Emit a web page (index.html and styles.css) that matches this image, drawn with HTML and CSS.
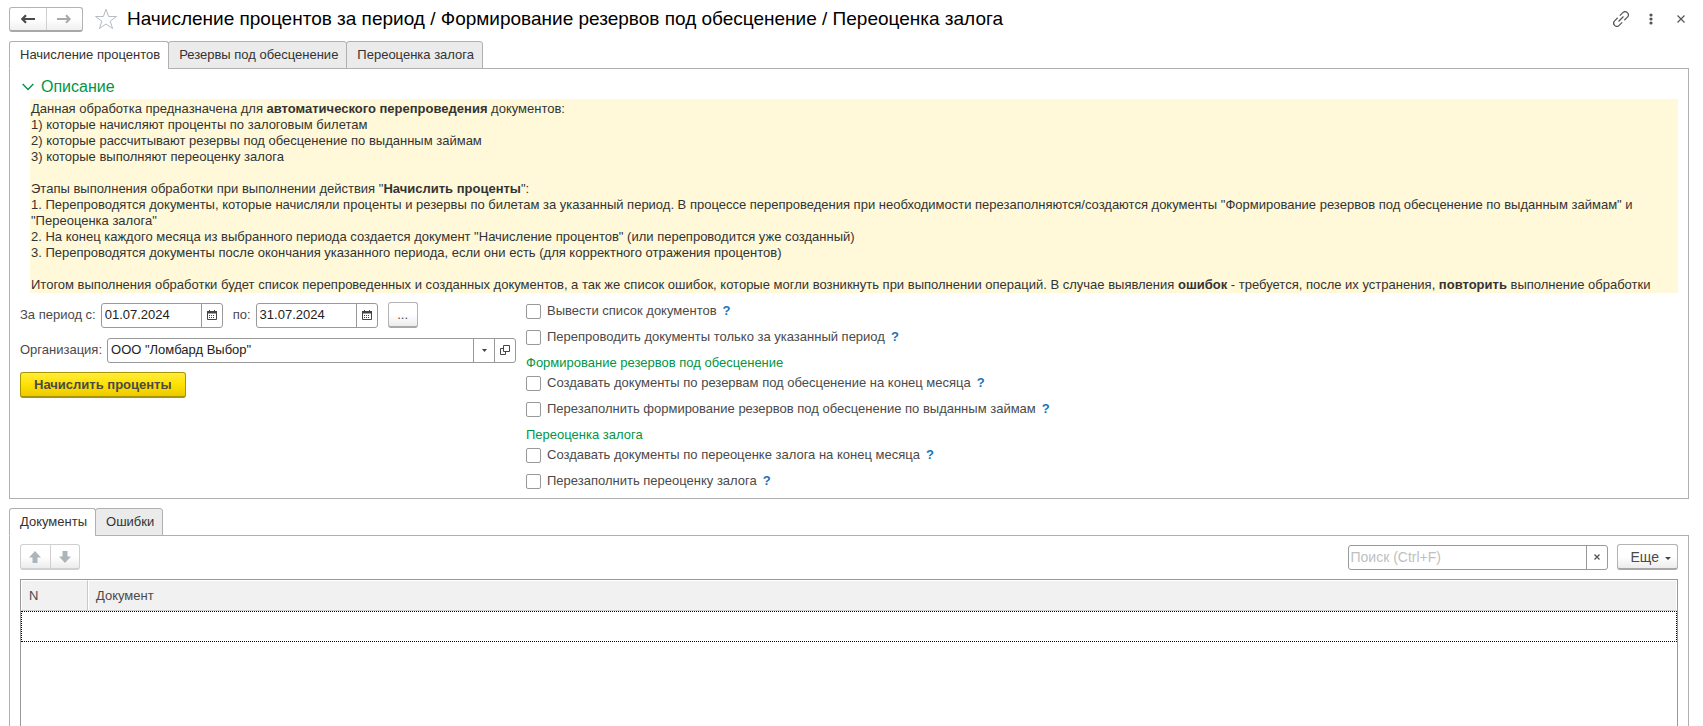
FILE: index.html
```html
<!DOCTYPE html>
<html lang="ru">
<head>
<meta charset="utf-8">
<title>Начисление процентов за период</title>
<link rel="stylesheet" href="styles.css">
</head>
<body>
<header class="titlebar">
  <div class="nav">
    <button class="nav-btn" type="button" aria-label="Назад"><svg width="14" height="10" viewBox="0 0 14 10"><path d="M5 1.200 1.300 5 5 8.800M1.500 5H14" fill="none" stroke="#4a4a4a" stroke-width="2.200"/></svg></button>
    <button class="nav-btn" type="button" aria-label="Вперед"><svg width="14" height="10" viewBox="0 0 14 10"><path d="M9 1.200 12.700 5 9 8.800M12.500 5H0" fill="none" stroke="#a8a8a8" stroke-width="2"/></svg></button>
  </div>
  <button class="icon-btn star" type="button" aria-label="В избранное"><svg width="24" height="22" viewBox="0 0 24 22"><path d="M12 1.200 14.600 8.500H22.500L16.200 13.100 18.600 20.600 12 16 5.400 20.600 7.800 13.100 1.500 8.500H9.400Z" fill="#fff" stroke="#b4bcc4" stroke-width="1"/></svg></button>
  <h1 class="title">Начисление процентов за период / Формирование резервов под обесценение / Переоценка залога</h1>
  <div class="window-tools">
    <button class="icon-btn" type="button" aria-label="Ссылка"><svg width="16" height="16" viewBox="0 0 16 16"><g fill="none" stroke="#555" stroke-width="1.200" transform="rotate(-45 8 8)"><path d="M6.500 4.800H2.200a3.200 3.200 0 0 0 0 6.400H6.500M9.500 4.800h4.300a3.200 3.200 0 0 1 0 6.400H9.500M4.500 8h7"/></g></svg></button>
    <button class="icon-btn" type="button" aria-label="Меню"><svg width="16" height="16" viewBox="0 0 16 16"><g fill="#555"><circle cx="8" cy="4" r="1.600"/><circle cx="8" cy="8" r="1.600"/><circle cx="8" cy="12" r="1.600"/></g></svg></button>
    <button class="icon-btn" type="button" aria-label="Закрыть"><svg width="16" height="16" viewBox="0 0 16 16"><path d="M4.500 4.500l7 7M11.500 4.500l-7 7" stroke="#555" stroke-width="1.200"/></svg></button>
  </div>
</header>

<div class="tabs" role="tablist">
  <button class="tab active" type="button" role="tab" aria-selected="true">Начисление процентов</button>
  <button class="tab" type="button" role="tab">Резервы под обесценение</button>
  <button class="tab" type="button" role="tab">Переоценка залога</button>
</div>
<main class="panel">
  <button class="group-title" type="button" aria-expanded="true"><svg width="12" height="8" viewBox="0 0 12 8"><path d="M0.700 1 6 6.500 11.300 1" fill="none" stroke="#009646" stroke-width="1.400"/></svg>Описание</button>
  <div class="description">
    <p>Данная обработка предназначена для <b>автоматического перепроведения</b> документов:<br>1) которые начисляют проценты по залоговым билетам<br>2) которые рассчитывают резервы под обесценение по выданным займам<br>3) которые выполняют переоценку залога</p>
    <p>Этапы выполнения обработки при выполнении действия "<b>Начислить проценты</b>":<br>1. Перепроводятся документы, которые начисляли проценты и резервы по билетам за указанный период. В процессе перепроведения при необходимости перезаполняются/создаются документы "Формирование резервов под обесценение по выданным займам" и "Переоценка залога"<br>2. На конец каждого месяца из выбранного периода создается документ "Начисление процентов" (или перепроводится уже созданный)<br>3. Перепроводятся документы после окончания указанного периода, если они есть (для корректного отражения процентов)</p>
    <p>Итогом выполнения обработки будет список перепроведенных и созданных документов, а так же список ошибок, которые могли возникнуть при выполнении операций. В случае выявления <b>ошибок</b> - требуется, после их устранения, <b>повторить</b> выполнение обработки</p>
  </div>
  <div class="columns">
    <form class="params">
      <div class="row">
        <label for="from">За период с:</label>
        <div class="field date"><input id="from" type="text" value="01.07.2024"><button type="button" aria-label="Выбрать дату"><svg width="10" height="10" viewBox="0 0 10 10"><path d="M0.500 1.500h9v8h-9z" fill="#fff" stroke="#444"/><path d="M0 1h10v2.500H0z" fill="#444"/><path d="M2.500 0v2M7.500 0v2" stroke="#444"/><path d="M2 5.500h6M2 7.500h6" stroke="#444" stroke-dasharray="1 1"/></svg></button></div>
        <label class="to" for="to">по:</label>
        <div class="field date"><input id="to" type="text" value="31.07.2024"><button type="button" aria-label="Выбрать дату"><svg width="10" height="10" viewBox="0 0 10 10"><path d="M0.500 1.500h9v8h-9z" fill="#fff" stroke="#444"/><path d="M0 1h10v2.500H0z" fill="#444"/><path d="M2.500 0v2M7.500 0v2" stroke="#444"/><path d="M2 5.500h6M2 7.500h6" stroke="#444" stroke-dasharray="1 1"/></svg></button></div>
        <button class="btn dots" type="button">...</button>
      </div>
      <div class="row">
        <label for="org">Организация:</label>
        <div class="field org"><input id="org" type="text" value="ООО &quot;Ломбард Выбор&quot;"><button type="button" aria-label="Список"><svg width="5" height="3" viewBox="0 0 5 3"><path d="M0 0h5L2.500 3z" fill="#444"/></svg></button><button type="button" aria-label="Открыть"><svg width="10" height="10" viewBox="0 0 10 10"><path d="M3.500 0.500h6v6h-6zM3.500 3.500h-3v6h5v-3" fill="none" stroke="#444"/></svg></button></div>
      </div>
      <button class="btn primary" type="button">Начислить проценты</button>
    </form>
    <div class="options">
      <div class="option"><label><input type="checkbox">Вывести список документов</label><button class="help" type="button">?</button></div>
      <div class="option"><label><input type="checkbox">Перепроводить документы только за указанный период</label><button class="help" type="button">?</button></div>
      <h2 class="subhead">Формирование резервов под обесценение</h2>
      <div class="option"><label><input type="checkbox">Создавать документы по резервам под обесценение на конец месяца</label><button class="help" type="button">?</button></div>
      <div class="option"><label><input type="checkbox">Перезаполнить формирование резервов под обесценение по выданным займам</label><button class="help" type="button">?</button></div>
      <h2 class="subhead">Переоценка залога</h2>
      <div class="option"><label><input type="checkbox">Создавать документы по переоценке залога на конец месяца</label><button class="help" type="button">?</button></div>
      <div class="option"><label><input type="checkbox">Перезаполнить переоценку залога</label><button class="help" type="button">?</button></div>
    </div>
  </div>
</main>

<div class="tabs lower" role="tablist">
  <button class="tab active" type="button" role="tab" aria-selected="true">Документы</button>
  <button class="tab" type="button" role="tab">Ошибки</button>
</div>
<section class="panel results">
  <div class="toolbar">
    <div class="move">
      <button class="move-btn" type="button" aria-label="Вверх"><svg width="12" height="12" viewBox="0 0 12 12"><path d="M6 0 12 6.500H8.500V12h-5V6.500H0z" fill="#abb5bc"/></svg></button>
      <button class="move-btn" type="button" aria-label="Вниз"><svg width="12" height="12" viewBox="0 0 12 12"><path d="M6 12 12 5.500H8.500V0h-5v5.500H0z" fill="#abb5bc"/></svg></button>
    </div>
    <div class="field search"><input type="text" aria-label="Поиск" placeholder="Поиск (Ctrl+F)"><button type="button" aria-label="Очистить"><svg width="6" height="6" viewBox="0 0 6 6"><path d="M0.500 0.500l5 5M5.500 0.500l-5 5" stroke="#555" stroke-width="1.300"/></svg></button></div>
    <button class="btn more" type="button">Еще<svg width="6" height="3" viewBox="0 0 6 3"><path d="M0 0h6L3 3z" fill="#444"/></svg></button>
  </div>
  <div class="grid">
    <table>
      <thead><tr><th class="num">N</th><th>Документ</th></tr></thead>
      <tbody><tr><td></td><td></td></tr></tbody>
    </table>
  </div>
</section>
</body>
</html>
```
FILE: styles.css
```css
* { box-sizing: border-box; }
body {
  margin: 0;
  padding: 7px 14px 0 9px;
  height: 100vh;
  overflow: hidden;
  display: flex;
  flex-direction: column;
  background: #fff;
  color: #4a4a4a;
  font: 13px/16px "Liberation Sans", Arial, sans-serif;
}
button, input { font: inherit; color: inherit; margin: 0; }
button { padding: 0; border: 0; background: none; }
svg { display: block; flex: none; }

.titlebar { display: flex; align-items: center; height: 24px; flex: none; margin-bottom: 10px; }
.nav {
  display: flex;
  width: 74px;
  height: 25px;
  border: 1px solid #b3b3b3;
  border-bottom: 2px solid #a8a8a8;
  border-radius: 3px;
  background: linear-gradient(#fff 50%, #f0f0f0);
}
.nav-btn, .move-btn { flex: 1; display: flex; align-items: center; justify-content: center; }
.nav-btn + .nav-btn, .move-btn + .move-btn { border-left: 1px solid #d0d0d0; }
.icon-btn { display: flex; }
.star { margin: 0 9px 0 11px; }
.title { flex: 1; margin: 0; font-size: 19px; line-height: 24px; font-weight: 400; color: #000; }
.window-tools { display: flex; gap: 14px; }

.tabs { display: flex; flex: none; height: 28px; margin-bottom: -1px; z-index: 1; }
.tab {
  padding: 0 8px 0 10px;
  border: 1px solid #b0b0b0;
  border-radius: 3px 3px 0 0;
  background: #ebebeb;
  color: #333;
  white-space: nowrap;
}
.tab + .tab { margin-left: -1px; }
.tab.active { background: #fff; border-bottom-color: #fff; }
.lower { margin-top: 9px; }

.panel { flex: none; border: 1px solid #b0b0b0; padding: 8px 10px 3px; }
.group-title { display: flex; align-items: center; gap: 7px; padding-left: 2px; font-size: 16px; line-height: 20px; color: #009646; }
.description { margin: 2px 0 6px 10px; padding: 2px 1px 0; background: #fff9d9; color: #333; }
.description p { margin: 0 0 16px; }
.description p:last-child { margin: 0; }

.columns { display: flex; gap: 10px; }
.params { width: 496px; flex: none; padding-top: 3px; }
.row { display: flex; align-items: center; height: 26px; margin-bottom: 9px; }
.row label { margin-right: 5px; white-space: nowrap; }
.row .to { margin-left: 10px; }
.field { display: flex; height: 25px; border: 1px solid #999; border-radius: 3px; background: #fff; color: #222; }
.field input { flex: 1; min-width: 0; padding: 0 3px; border: 0; background: none; outline: 0; }
.field button { width: 21px; flex: none; display: flex; align-items: center; justify-content: center; border-left: 1px solid #999; }
.date { width: 122px; }
.org { flex: 1; }
.btn {
  height: 26px;
  border: 1px solid #b3b3b3;
  border-bottom: 2px solid #a8a8a8;
  border-radius: 3px;
  background: linear-gradient(#fff 50%, #ececec);
}
.dots { width: 30px; margin-left: 10px; }
.primary {
  padding: 0 13px;
  font-weight: 700;
  border: 1px solid #a89600;
  border-bottom-width: 2px;
  background: linear-gradient(#ffec3d, #ffe100 50%, #ecc900);
}

.options { flex: 1; }
.option { display: flex; align-items: center; height: 24px; margin-bottom: 2px; }
.option label { display: flex; align-items: center; gap: 6px; }
.option input { appearance: none; width: 15px; height: 15px; border: 1px solid #999; border-radius: 2px; background: #fff; }
.help { margin-left: 6px; font-weight: 700; color: #1a73b8; }
.subhead { margin: 5px 0 0; font-size: 13px; line-height: 17px; font-weight: 400; color: #009646; }

.results { flex: 1; min-height: 0; display: flex; flex-direction: column; padding-bottom: 0; border-bottom: 0; }
.toolbar { display: flex; align-items: center; flex: none; margin-bottom: 9px; }
.move {
  display: flex;
  width: 60px;
  height: 26px;
  border: 1px solid #d0d0d0;
  border-bottom-width: 2px;
  border-radius: 3px;
  background: linear-gradient(#fff 50%, #ececec);
}
.search { width: 260px; margin: 0 9px 0 auto; font-size: 14px; }
.search input { padding: 0 2px; }
.search input::placeholder { color: #c0c0c0; opacity: 1; }
.more { display: flex; align-items: center; gap: 6px; padding: 0 6px 0 13px; font-size: 14px; }
.more svg { margin-top: 4px; }

.grid { flex: 1; min-height: 0; border: 1px solid #999; border-bottom: 0; }
.grid table { width: 100%; border-collapse: separate; border-spacing: 0; }
.grid th {
  height: 31px;
  padding: 0 7px;
  border: 1px solid #fff;
  border-bottom-color: #d0d0d0;
  background: #f1f1f1;
  font-weight: 400;
  text-align: left;
}
.grid .num { width: 67px; border-right-color: #c8c8c8; }
.grid tbody tr { outline: 1px dotted #000; outline-offset: -1px; }
.grid td { height: 31px; padding: 0; }
```
